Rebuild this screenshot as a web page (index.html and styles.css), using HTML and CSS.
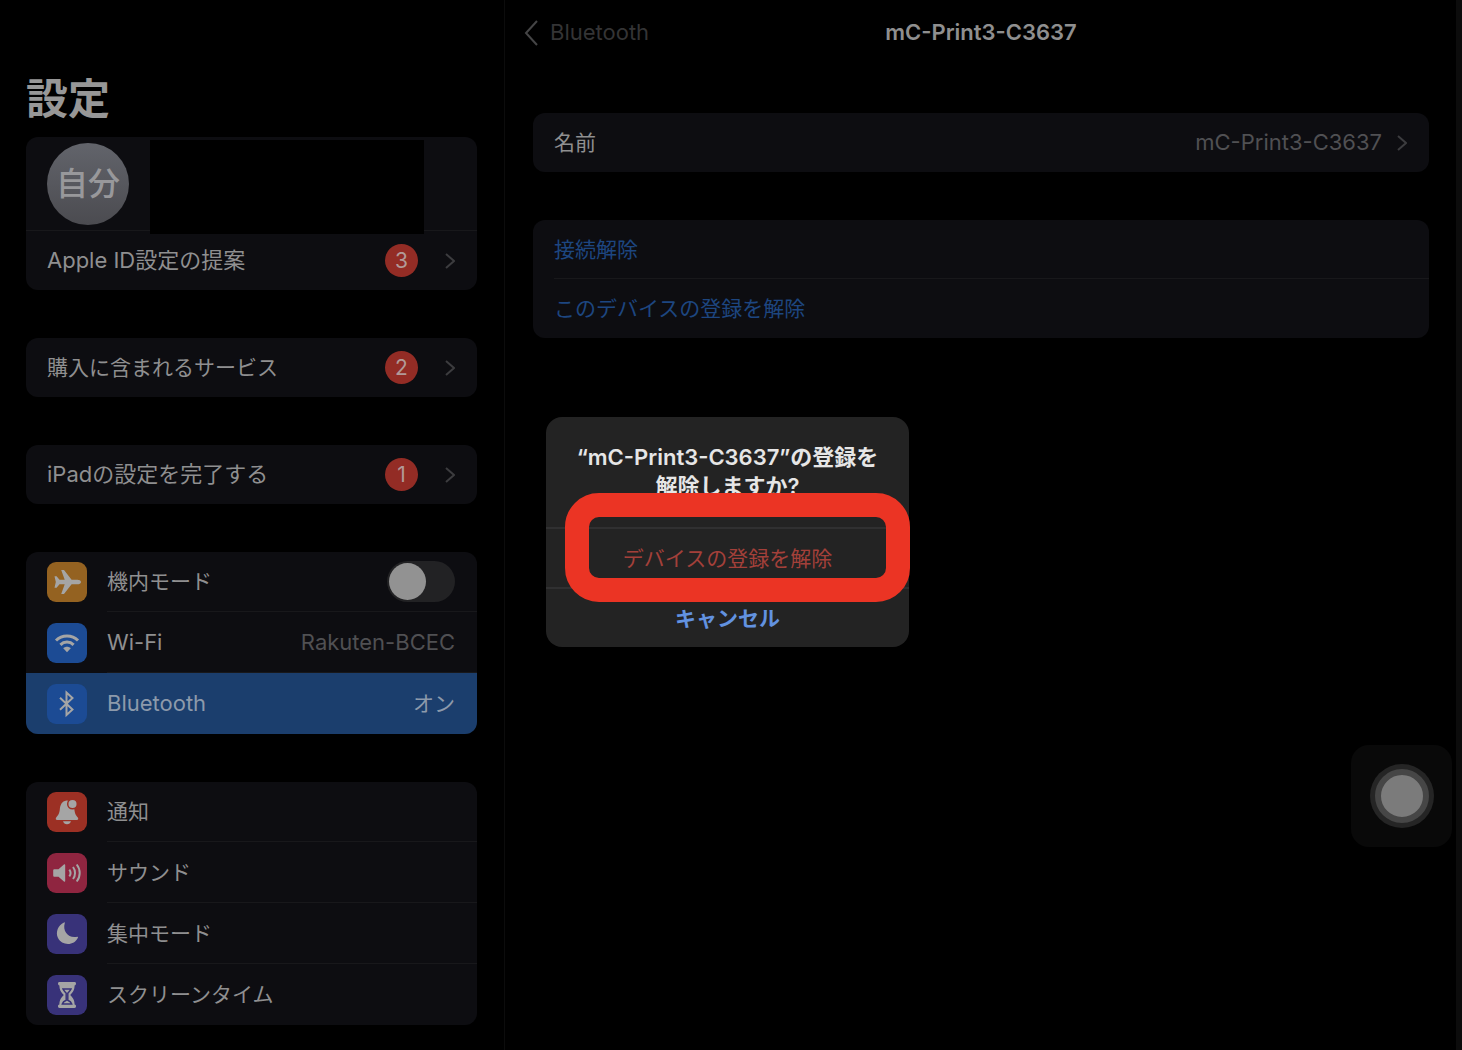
FILE: index.html
```html
<!DOCTYPE html>
<html lang="ja">
<head>
    <meta charset="utf-8">
    <title>設定</title>
    <link rel="stylesheet" href="styles.css">
</head>
<body>
<div class="app">
    <aside class="sidebar">
        <h1>設定</h1>

        <div class="card">
            <div class="profile">
                <span class="avatar">自分</span>
                <span class="masked-name"></span>
            </div>
            <a class="row" href="#">
                <span class="row-body">
                    <span class="label large">Apple ID設定の提案</span>
                    <span class="badge">3</span>
                    <svg class="chevron" viewBox="0 0 10 18"><path d="M1 2l8 7-8 7"/></svg>
                </span>
            </a>
        </div>

        <div class="card">
            <a class="row" href="#">
                <span class="row-body">
                    <span class="label">購入に含まれるサービス</span>
                    <span class="badge">2</span>
                    <svg class="chevron" viewBox="0 0 10 18"><path d="M1 2l8 7-8 7"/></svg>
                </span>
            </a>
        </div>

        <div class="card">
            <a class="row" href="#">
                <span class="row-body">
                    <span class="label large">iPadの設定を完了する</span>
                    <span class="badge">1</span>
                    <svg class="chevron" viewBox="0 0 10 18"><path d="M1 2l8 7-8 7"/></svg>
                </span>
            </a>
        </div>

        <div class="card tall">
            <div class="row">
                <svg class="icon orange" viewBox="0 0 40 40">
                    <path d="M34 20c0-1.500-1.800-2.300-3.700-2.300h-5.700L17 8.100h-2.800l3.500 9.600h-5.200l-2.900-3.400H7.500L8.800 20l-1.300 5.700h2.100l2.900-3.400h5.200l-3.500 9.600H17l7.600-9.600h5.700c1.900 0 3.700-.8 3.700-2.300z"/>
                </svg>
                <span class="row-body">
                    <label class="label" for="airplane">機内モード</label>
                    <input class="switch" type="checkbox" id="airplane">
                </span>
            </div>
            <a class="row" href="#">
                <svg class="icon blue" viewBox="0 0 40 40">
                    <path class="line" d="M9 17.500c6-6 16-6 22 0M13.400 21.800c3.700-3.600 9.500-3.600 13.200 0"/>
                    <path d="M20 29.300l-3.800-4c2.100-2 5.500-2 7.600 0z"/>
                </svg>
                <span class="row-body">
                    <span class="label large">Wi-Fi</span>
                    <span class="value large">Rakuten-BCEC</span>
                </span>
            </a>
            <a class="row selected" href="#">
                <svg class="icon blue" viewBox="0 0 40 40">
                    <path class="thin" d="M13 13.800l12.500 11.600-6 5.600V8.500l6 5.600L13 25.700"/>
                </svg>
                <span class="row-body">
                    <span class="label large">Bluetooth</span>
                    <span class="value">オン</span>
                </span>
            </a>
        </div>

        <div class="card tall">
            <a class="row" href="#">
                <svg class="icon red" viewBox="0 0 40 40">
                    <path d="M19.500 8.500c-4.800.6-6.300 4.600-6.700 9-.4 4.400-2 6-3.600 8-.9 1.200-.5 2.500 1 2.500h19.600c1.500 0 1.900-1.300 1-2.500-1.600-2-3-3.600-3.400-8-.5-5-2.500-8.700-7.900-9zM16 29.300h8c-.6 1.900-2 2.900-4 2.900s-3.400-1-4-2.900z"/>
                    <circle class="dot" cx="25.500" cy="12" r="4.800"/>
                </svg>
                <span class="row-body"><span class="label">通知</span></span>
            </a>
            <a class="row" href="#">
                <svg class="icon pink" viewBox="0 0 40 40">
                    <path d="M7.500 16.300h4l5.400-4.900c.6-.5 1.300-.2 1.300.6v16c0 .8-.7 1.100-1.300.6l-5.400-4.900h-4c-.8 0-1.300-.5-1.300-1.300v-4.800c0-.8.5-1.300 1.300-1.300z"/>
                    <path class="thin" d="M22.300 16.600c1.500 2 1.500 4.800 0 6.800M26 14c2.700 3.500 2.700 8.500 0 12M29.700 11.500c4 5 4 12 0 17"/>
                </svg>
                <span class="row-body"><span class="label">サウンド</span></span>
            </a>
            <a class="row" href="#">
                <svg class="icon indigo" viewBox="0 0 40 40">
                    <path d="M17.800 9c-2.600 8.500 3.800 15.700 12.500 13.700.6-.1.900.3.700.8C27.300 32.200 14.800 32 10.900 23.800 8.300 18 11 11 17 8.400c.6-.2 1 .1.800.6z"/>
                </svg>
                <span class="row-body"><span class="label">集中モード</span></span>
            </a>
            <a class="row" href="#">
                <svg class="icon indigo" viewBox="0 0 40 40">
                    <path d="M12.500 7h15c1 0 1.500.7 1.500 1.700 0 .9-.5 1.500-1.400 1.700 0 4.600-1.800 6.800-4.400 9.600 2.600 2.800 4.400 5 4.400 9.600.9.200 1.400.8 1.400 1.700 0 1-.5 1.700-1.500 1.700h-15c-1 0-1.500-.7-1.500-1.700 0-.9.500-1.500 1.400-1.700 0-4.600 1.800-6.800 4.400-9.600-2.600-2.800-4.400-5-4.400-9.600-.9-.2-1.400-.8-1.400-1.700 0-1 .5-1.700 1.500-1.700z"/>
                    <path class="sand" d="M16 14h8c-.7 1.800-2.200 3-3.200 4.200v7c1.800.7 3.400 1.800 3.900 3.800h-9.400c.5-2 2.100-3.100 3.900-3.800v-7C18.200 17 16.700 15.800 16 14z"/>
                </svg>
                <span class="row-body"><span class="label">スクリーンタイム</span></span>
            </a>
        </div>
    </aside>

    <main class="detail">
        <header class="navbar">
            <a class="back large" href="#">
                <svg class="back-arrow" viewBox="0 0 14 26"><path d="M13 1L2 13l11 12"/></svg>
                Bluetooth
            </a>
            <h2 class="large">mC-Print3-C3637</h2>
        </header>

        <div class="card">
            <a class="row" href="#">
                <span class="row-body">
                    <span class="label">名前</span>
                    <span class="value large">mC-Print3-C3637</span>
                    <svg class="chevron" viewBox="0 0 10 18"><path d="M1 2l8 7-8 7"/></svg>
                </span>
            </a>
        </div>

        <div class="card">
            <button class="row action" type="button"><span class="row-body">接続解除</span></button>
            <button class="row action" type="button"><span class="row-body">このデバイスの登録を解除</span></button>
        </div>
    </main>
</div>

<div class="alert" role="alertdialog" aria-labelledby="alertTitle">
    <h3 class="large" id="alertTitle">“mC-Print3-C3637”の登録を<br>解除しますか?</h3>
    <button class="alert-button destructive" type="button">デバイスの登録を解除</button>
    <button class="alert-button cancel" type="button">キャンセル</button>
    <div class="highlight"></div>
</div>

<button class="assistive" type="button" aria-label="AssistiveTouch">
    <span class="assistive-dot"></span>
</button>
</body>
</html>
```
FILE: styles.css
```css
* {
    box-sizing: border-box;
}

body {
    margin: 0;
    background-color: #000000;
    color: #8f8f90;
    font-family: Inter, "Noto Sans CJK JP", sans-serif;
    font-size: 21px;
    line-height: 29px;
}

a {
    color: inherit;
    text-decoration: none;
}

button {
    font: inherit;
    border: none;
    cursor: pointer;
}

h1, h2, h3 {
    margin: 0;
}

.large {
    font-size: 22px;
}

.app {
    display: flex;
    min-height: 100vh;
    border-right: 6px solid #0c0c0c;
}

.sidebar {
    flex: none;
    width: 505px;
    padding: 69px 27px 26px 26px;
    border-right: 1px solid #0c0c0c;
}

.sidebar h1 {
    margin-bottom: 8px;
    color: #979797;
    font-size: 42px;
    line-height: 60px;
}

.detail {
    flex: 1;
    padding: 0 27px 0 28px;
}

/* grouped rows */
.card {
    margin-bottom: 48px;
    background-color: #0d0d11;
    border-radius: 12px;
    overflow: hidden;
}

.row {
    display: flex;
    align-items: center;
    gap: 20px;
    width: 100%;
    height: 59px;
    padding: 0 0 0 21px;
}

.tall .row {
    height: 61px;
}

.tall .row:first-child {
    height: 60px;
}

.row-body {
    display: flex;
    flex: 1;
    align-items: center;
    align-self: stretch;
    padding-right: 22px;
    border-bottom: 1px solid #18181b;
}

.row:last-child .row-body {
    border-bottom: none;
}

.label {
    flex: 1;
}

.value {
    color: #505053;
}

.selected {
    background-color: #1b3e6d;
    color: #8d9aab;
}

.selected .value {
    color: #8d9aab;
}

.badge {
    width: 33px;
    height: 33px;
    margin-right: 27px;
    border-radius: 50%;
    background-color: #932c25;
    color: #b29a98;
    line-height: 33px;
    text-align: center;
}

.chevron {
    width: 10px;
    height: 18px;
    fill: none;
    stroke: #3c3c3f;
    stroke-width: 2;
}

.value + .chevron {
    margin-left: 15px;
}

/* profile */
.profile {
    position: relative;
    height: 94px;
    padding: 6px 21px;
    border-bottom: 1px solid #18181b;
}

.avatar {
    display: block;
    width: 82px;
    height: 82px;
    border-radius: 50%;
    background: linear-gradient(#62646b, #4b4b50);
    color: #98989b;
    font-size: 32px;
    font-weight: 500;
    line-height: 82px;
    text-align: center;
}

.masked-name {
    position: absolute;
    top: 3px;
    left: 124px;
    width: 274px;
    height: 94px;
    background-color: #000000;
}

/* icons */
.icon {
    flex: none;
    width: 40px;
    height: 40px;
    border-radius: 9px;
    fill: #a5a5a5;
}

.icon .line,
.icon .thin {
    fill: none;
    stroke: #a5a5a5;
    stroke-width: 3;
}

.icon .thin {
    stroke-width: 2;
}

.icon .dot {
    stroke: #9c3024;
    stroke-width: 1.5;
}

.icon .sand {
    fill: none;
    stroke: #383279;
    stroke-width: 1.5;
}

.orange {
    background-color: #946221;
}

.blue {
    background-color: #1c4b94;
}

.red {
    background-color: #9c3024;
}

.pink {
    background-color: #8f2540;
}

.indigo {
    background-color: #383279;
}

.switch {
    appearance: none;
    width: 68px;
    height: 41px;
    margin: 0;
    padding: 2px;
    border-radius: 21px;
    background-color: #222224;
}

.switch::before {
    content: "";
    display: block;
    width: 37px;
    height: 37px;
    border-radius: 50%;
    background-color: #929292;
}

.switch:checked::before {
    margin-left: auto;
}

/* detail pane */
.navbar {
    display: grid;
    grid-template-columns: 1fr auto 1fr;
    align-items: center;
    height: 65px;
    margin-bottom: 48px;
}

.navbar h2 {
    color: #8f8f8f;
    font-weight: 600;
}

.back {
    display: flex;
    align-items: center;
    gap: 12px;
    margin-left: -9px;
    color: #343435;
}

.back-arrow {
    width: 14px;
    height: 26px;
    fill: none;
    stroke: #454546;
    stroke-width: 2;
}

.action {
    background: none;
    color: #1d4680;
    text-align: left;
}

/* alert */
.alert {
    position: absolute;
    top: 417px;
    left: 546px;
    width: 363px;
    border-radius: 16px;
    background-color: #232323;
    text-align: center;
}

.alert h3 {
    padding: 26px 20px;
    color: #e6e6e6;
    font-weight: 600;
}

.alert-button {
    display: block;
    width: 100%;
    height: 60px;
    border-top: 2px solid #303031;
    background: none;
}

.destructive {
    color: #a3403a;
}

.cancel {
    color: #6292e0;
    font-weight: 600;
}

.highlight {
    position: absolute;
    top: 76px;
    left: 19px;
    width: 345px;
    height: 109px;
    border: 24px solid #eb3424;
    border-radius: 34px;
    pointer-events: none;
}

/* floating button */
.assistive {
    position: absolute;
    top: 745px;
    right: 10px;
    width: 101px;
    height: 102px;
    padding: 0;
    border-radius: 18px;
    background-color: #090909;
}

.assistive-dot {
    display: block;
    width: 54px;
    height: 54px;
    margin: 0 auto;
    border: 6px solid #464646;
    border-radius: 50%;
    background-color: #7b7b7b;
    box-shadow: 0 0 0 5px #252525;
}
```
